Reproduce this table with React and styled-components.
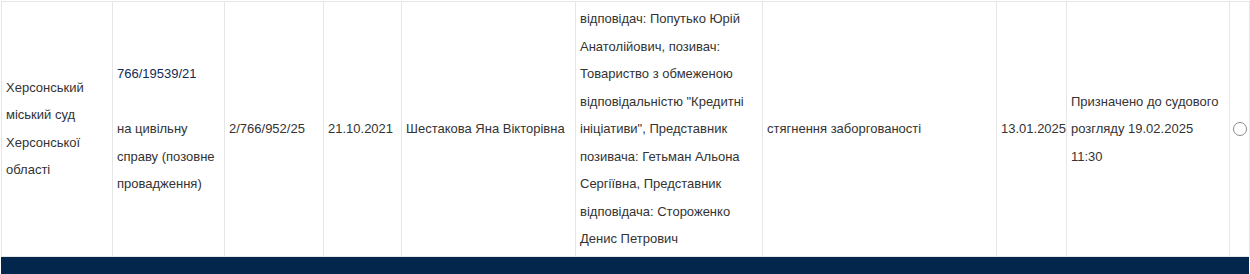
import React from 'react';
import styled, { createGlobalStyle } from 'styled-components';

const GlobalStyle = createGlobalStyle`
  html, body {
    margin: 0;
    padding: 0;
    background: #fff;
  }
  body {
    font-family: "Liberation Sans", Arial, sans-serif;
    color: #333;
  }
`;

const Page = styled.div`
  padding: 1px 1px 0 1px;
  width: 1248px;
`;

const Table = styled.table`
  width: 1248px;
  table-layout: fixed;
  border-collapse: collapse;
  font-size: 13px;
  line-height: 27.5px;
`;

const Cell = styled.td`
  border: 1px solid #e6e6e6;
  padding: 3px 4px;
  vertical-align: middle;
  text-align: left;
  word-wrap: break-word;
  white-space: ${(p) => (p.$nowrap ? 'nowrap' : 'normal')};
`;

const CaseLink = styled.a`
  color: #132a57;
  text-decoration: none;
`;

const Radio = styled.span`
  display: block;
  width: 12px;
  height: 12px;
  border: 1px solid #8a8a8a;
  border-radius: 50%;
  margin-left: -1px;
`;

const Footer = styled.div`
  height: 17px;
  background: #03264d;
`;

const cols = [111, 112, 99, 78, 174, 187, 234, 70, 163, 20];

const row = {
  court: 'Херсонський міський суд Херсонської області',
  caseNo: '766/19539/21',
  caseType: 'на цивільну справу (позовне провадження)',
  proceeding: '2/766/952/25',
  regDate: '21.10.2021',
  judge: 'Шестакова Яна Вікторівна',
  parties:
    'відповідач: Попутько Юрій Анатолійович, позивач: Товариство з обмеженою відповідальністю "Кредитні ініціативи", Представник позивача: Гетьман Альона Сергіївна, Представник відповідача: Стороженко Денис Петрович',
  subject: 'стягнення заборгованості',
  date: '13.01.2025',
  status: 'Призначено до судового розгляду 19.02.2025 11:30',
};

export default function App() {
  return (
    <>
      <GlobalStyle />
      <Page>
        <Table>
          <colgroup>
            {cols.map((w, i) => (
              <col key={i} style={{ width: w }} />
            ))}
          </colgroup>
          <tbody>
            <tr>
              <Cell>{row.court}</Cell>
              <Cell>
                <CaseLink href="#">{row.caseNo}</CaseLink>
                <br />
                <br />
                {row.caseType}
              </Cell>
              <Cell>{row.proceeding}</Cell>
              <Cell>{row.regDate}</Cell>
              <Cell>{row.judge}</Cell>
              <Cell>{row.parties}</Cell>
              <Cell>{row.subject}</Cell>
              <Cell $nowrap>{row.date}</Cell>
              <Cell>{row.status}</Cell>
              <Cell>
                <Radio />
              </Cell>
            </tr>
          </tbody>
        </Table>
        <Footer />
      </Page>
    </>
  );
}
